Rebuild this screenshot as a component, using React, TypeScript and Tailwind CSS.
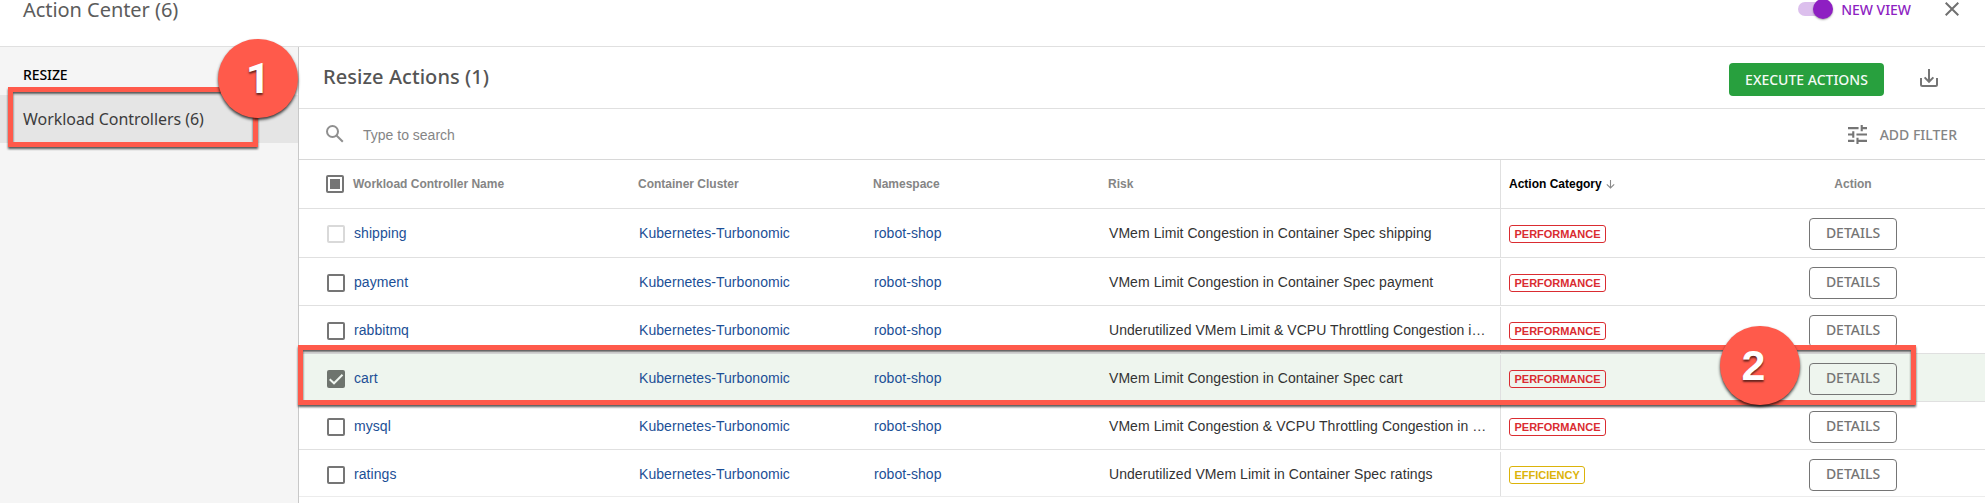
import React from "react";

type Check = "disabled" | "off" | "on";
type Row = { name: string; risk: string; category: "PERFORMANCE" | "EFFICIENCY"; check: Check };

const rows: Row[] = [
  { name: "shipping", risk: "VMem Limit Congestion in Container Spec shipping", category: "PERFORMANCE", check: "disabled" },
  { name: "payment", risk: "VMem Limit Congestion in Container Spec payment", category: "PERFORMANCE", check: "off" },
  { name: "rabbitmq", risk: "Underutilized VMem Limit & VCPU Throttling Congestion i…", category: "PERFORMANCE", check: "off" },
  { name: "cart", risk: "VMem Limit Congestion in Container Spec cart", category: "PERFORMANCE", check: "on" },
  { name: "mysql", risk: "VMem Limit Congestion & VCPU Throttling Congestion in …", category: "PERFORMANCE", check: "off" },
  { name: "ratings", risk: "Underutilized VMem Limit in Container Spec ratings", category: "EFFICIENCY", check: "off" },
];

const grid = "grid grid-cols-[54px_285px_235px_235px_392px_309px_1fr]";
const noto = "font-['Noto_Sans','Open_Sans',sans-serif]";

function Checkbox({ state }: { state: Check }) {
  if (state === "on") {
    return (
      <svg className="size-[18px]" viewBox="0 0 18 18">
        <rect width="18" height="18" rx="2" fill="#6e746e" />
        <path d="M2.7 9.2 7 13.3 15.5 4.8" fill="none" stroke="#f0f6f0" strokeWidth="2" />
      </svg>
    );
  }
  return (
    <span
      className={
        "block size-[18px] rounded-[2px] border-2 " + (state === "disabled" ? "border-[#d9d9d9]" : "border-[#757575]")
      }
    />
  );
}

function StepBadge({ n, className }: { n: string; className: string }) {
  return (
    <div
      className={
        "absolute flex h-[79px] w-20 items-center justify-center rounded-full bg-[#ff5a4b] text-[43px] leading-none font-bold text-white shadow-[0_2px_3px_rgba(0,0,0,0.75)] [text-shadow:0_2px_2px_rgba(0,0,0,0.6)] " +
        className
      }
    >
      {n}
    </div>
  );
}

export default function App() {
  return (
    <div className="relative flex h-[503px] w-[1985px] flex-col overflow-hidden bg-white font-['Liberation_Sans',Arial,sans-serif]">
      <header className={"flex h-[47px] shrink-0 items-start border-b border-[#e0e0e0] pr-[26px] pl-[23px] " + noto}>
        <h1 className="h-5 text-[20px] leading-5 tracking-[-0.05px] text-[#5c5c5c]">Action Center (6)</h1>
        <div className="ml-auto flex h-[18px] items-center">
          <span className="relative block h-[14px] w-[34px] rounded-full bg-[#dcbfed]">
            <span className="absolute -top-[3px] left-[15px] size-5 rounded-full bg-[#8e1fc2] shadow-[0_1px_2px_rgba(0,0,0,0.35)]" />
          </span>
          <span className="ml-[9px] text-[14px] font-medium tracking-[-0.02px] text-[#8e1fc2]">NEW VIEW</span>
          <svg className="ml-[34px] size-[14px]" viewBox="0 0 14 14" stroke="#707070" strokeWidth="2">
            <path d="M.7.7 13.3 13.3M13.3.7.7 13.3" />
          </svg>
        </div>
      </header>

      <div className="flex min-h-0 flex-1">
        <nav className={"w-[299px] shrink-0 border-r border-[#c8c8c8] bg-[#f5f5f5] " + noto}>
          <div className="flex h-12 items-center pt-[6px] pl-[23px] text-[14px] font-medium tracking-[-0.1px] text-black">
            RESIZE
          </div>
          <div className="flex h-12 items-center bg-[#e5e5e5] pl-[23px] text-[16px] tracking-[-0.05px] text-[#3c3c3c]">
            Workload Controllers (6)
          </div>
        </nav>

        <main className="flex min-w-0 flex-1 flex-col">
          <div className={"flex h-[62px] shrink-0 items-center border-b border-[#e0e0e0] pr-[47px] pl-6 " + noto}>
            <h2 className="pb-[2px] text-[20px] font-medium tracking-[0.06px] text-[#555]">Resize Actions (1)</h2>
            <button className="mt-[3px] ml-auto h-[33px] w-[155px] rounded-[4px] bg-[#28a03e] text-[14px] font-medium text-[#f4faf5]">
              EXECUTE ACTIONS
            </button>
            <svg className="ml-[36px] size-[18px]" viewBox="0 0 18 18" fill="none" stroke="#757575" strokeWidth="2">
              <path d="M1 9v6.5a1.5 1.5 0 0 0 1.5 1.5h13a1.5 1.5 0 0 0 1.5-1.5V9M9 0v12.5M4.6 8.4 9 12.8l4.4-4.4" />
            </svg>
          </div>

          <div className="flex h-[51px] shrink-0 items-center border-b border-[#d8d8d8] pr-7 pl-[27px]">
            <svg className="size-[18px]" viewBox="0 0 18 18" fill="none" stroke="#8f8f8f" strokeWidth="2">
              <circle cx="6.5" cy="6.5" r="5.5" />
              <path d="m10.5 10.5 6.3 6.3" />
            </svg>
            <span className="ml-[19px] pt-[2px] text-[14px] text-[#858585]">Type to search</span>
            <svg className="ml-auto size-[19px]" viewBox="0 0 18 18" fill="#757575">
              <path d="M0 14v2h6v-2H0zM0 2v2h10V2H0zm10 16v-2h8v-2h-8v-2H8v6h2zM4 6v2H0v2h4v2h2V6H4zm14 4V8H8v2h10zm-6-4h2V4h4V2h-4V0h-2v6z" />
            </svg>
            <span className={"ml-[13px] text-[14px] font-medium text-[#858585] " + noto}>ADD FILTER</span>
          </div>

          <div
            className={
              grid + " h-[49px] shrink-0 items-center border-b border-[#e0e0e0] text-[12px] font-bold text-[#858585]"
            }
          >
            <span className="ml-[27px] flex size-[18px] items-center justify-center rounded-[2px] border-2 border-[#757575]">
              <span className="size-[10px] bg-[#757575]" />
            </span>
            <span>Workload Controller Name</span>
            <span>Container Cluster</span>
            <span>Namespace</span>
            <span>Risk</span>
            <span className="flex h-full items-center gap-[4px] border-l border-[#e0e0e0] pl-[8px] text-black">
              Action Category
              <svg className="size-[9px]" viewBox="0 0 9 9" fill="none" stroke="#8a8a8a" strokeWidth="1.1">
                <path d="M4.5 0v8M.8 4.3 4.5 8l3.7-3.7" />
              </svg>
            </span>
            <span className="w-[88px] text-center">Action</span>
          </div>

          {rows.map((row, i) => (
            <div
              key={row.name}
              className={
                grid +
                " shrink-0 items-center border-b text-[14px] tracking-[0.06px] " +
                (i === 0 ? "h-[49px] " : i === 5 ? "h-[47px] pt-[2px] " : "h-12 pt-px ") +
                (i === 5 ? "border-[#ececec] " : "border-[#e0e0e0] ") +
                (row.check === "on" ? "bg-[#eef5ee]" : "bg-white")
              }
            >
              <span className="pt-[2px] pl-[28px]">
                <Checkbox state={row.check} />
              </span>
              <span className="pl-[1px] text-[#1c4f96]">{row.name}</span>
              <span className="pl-[1px] text-[#1c4f96]">Kubernetes-Turbonomic</span>
              <span className="pl-[1px] text-[#1c4f96]">robot-shop</span>
              <span className="pl-[1px] whitespace-nowrap text-[#333]">{row.risk}</span>
              <span className="flex h-full items-center border-l border-[#e0e0e0] pt-[2px] pl-[8px]">
                <span
                  className={
                    "flex h-[18px] items-center rounded-[3px] border px-[4.5px] text-[11px] font-bold tracking-[-0.02px] " +
                    (row.category === "PERFORMANCE" ? "border-[#da2c31] text-[#da2c31]" : "border-[#dcb30a] text-[#dcb30a]")
                  }
                >
                  {row.category}
                </span>
              </span>
              <span className="pt-px">
                <button
                  className={
                    "block h-8 w-[88px] rounded-[4px] border border-[#757575] pb-[2px] text-[14px] font-medium tracking-normal text-[#757575] " +
                    noto
                  }
                >
                  DETAILS
                </button>
              </span>
            </div>
          ))}
        </main>
      </div>

      <div className="absolute top-[87px] left-2 h-[60px] w-[250px] border-[5px] border-[#ff5a4b] [filter:drop-shadow(0_2px_1px_rgba(0,0,0,0.65))]" />
      <StepBadge n="1" className="top-[39px] left-[218px] font-['Roboto',sans-serif]" />
      <div className="absolute top-[345px] left-[298px] h-[60px] w-[1618px] border-[5px] border-[#ff5a4b] [filter:drop-shadow(0_2px_1px_rgba(0,0,0,0.65))]" />
      <StepBadge n="2" className="top-[326px] left-[1720px] pr-[13px]" />
    </div>
  );
}
